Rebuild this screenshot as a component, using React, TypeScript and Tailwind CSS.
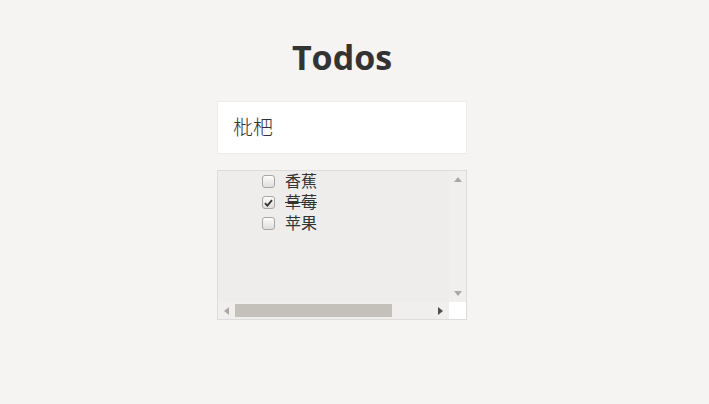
import React from "react";

const items = [
  { label: "香蕉", done: false },
  { label: "草莓", done: true },
  { label: "苹果", done: false },
];

function Box({ checked }: { checked: boolean }) {
  return (
    <span className="relative inline-flex h-[13px] w-[13px] shrink-0 items-center justify-center rounded-[3px] border border-[#a6a6a6] bg-gradient-to-b from-[#fcfcfc] to-[#dedede]">
      {checked && (
        <svg width="9" height="8" viewBox="0 0 9 8">
          <path d="M1 4.2 L3.4 6.6 L8 1.2" fill="none" stroke="#333" strokeWidth="1.8" />
        </svg>
      )}
    </span>
  );
}

export default function App() {
  return (
    <div
      className="min-h-[404px] w-full bg-[#f5f4f2]"
      style={{ fontFamily: '"Open Sans", "Noto Sans CJK SC", sans-serif' }}
    >
      <div className="flex w-[684px] flex-col items-center pt-[33px]">
        <h1 className="text-[34px] font-bold leading-[48px] text-[#333]">Todos</h1>
        <div className="mt-[20px] flex h-[53px] w-[250px] items-center border border-[#ececec] bg-white pl-[15px] text-[20px] font-light text-[#333]">
          枇杷
        </div>
        <div className="mt-[16px] flex h-[150px] w-[250px] flex-col border border-[#dcdcdc] bg-[#eeedeb]">
          <div className="flex flex-1">
            <div className="flex flex-1 flex-col pl-[44px] text-[16px] leading-[21px] text-[#333]">
              {items.map((it) => (
                <label key={it.label} className="flex h-[21px] items-center gap-[10px]">
                  <Box checked={it.done} />
                  <span className={it.done ? "line-through" : ""}>{it.label}</span>
                </label>
              ))}
            </div>
            <div className="flex w-[17px] flex-col items-center justify-between bg-[#f0efed] py-[6px]">
              <svg width="8" height="5" viewBox="0 0 8 5">
                <path d="M4 0 L8 5 L0 5 Z" fill="#a8a8a8" />
              </svg>
              <svg width="8" height="5" viewBox="0 0 8 5">
                <path d="M0 0 L8 0 L4 5 Z" fill="#a8a8a8" />
              </svg>
            </div>
          </div>
          <div className="flex h-[17px]">
            <div className="flex flex-1 items-center bg-[#f0efed]">
              <div className="flex w-[17px] justify-center">
                <svg width="5" height="8" viewBox="0 0 5 8">
                  <path d="M5 0 L5 8 L0 4 Z" fill="#a8a8a8" />
                </svg>
              </div>
              <div className="h-[13px] w-[157px] bg-[#c4c1ba]" />
              <div className="flex-1" />
              <div className="flex w-[17px] justify-center">
                <svg width="5" height="8" viewBox="0 0 5 8">
                  <path d="M0 0 L5 4 L0 8 Z" fill="#505050" />
                </svg>
              </div>
            </div>
            <div className="w-[17px] bg-white" />
          </div>
        </div>
      </div>
    </div>
  );
}
